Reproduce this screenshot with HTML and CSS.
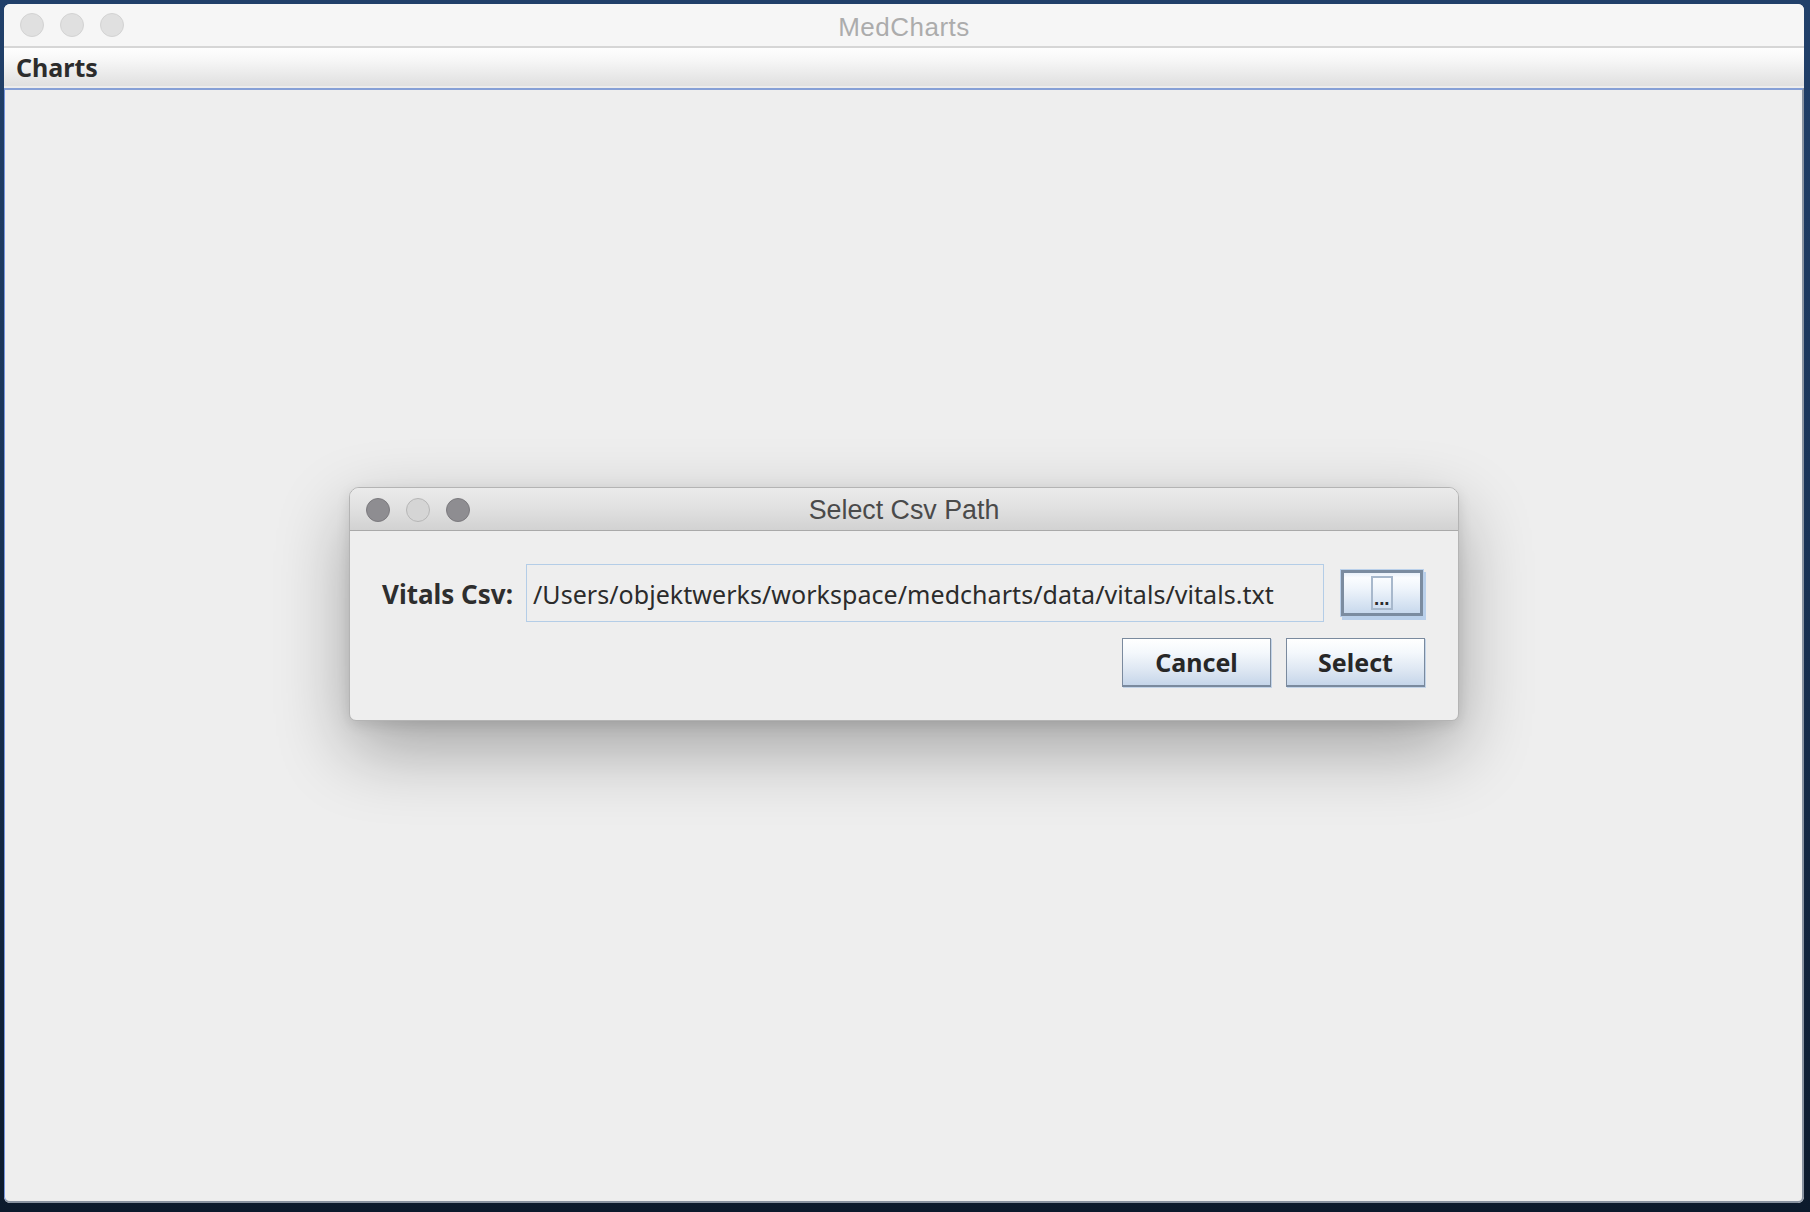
FILE: index.html
```html
<!DOCTYPE html>
<html lang="en">
<head>
<meta charset="utf-8">
<title>MedCharts</title>
<link rel="stylesheet" href="styles.css">
</head>
<body>
<div class="desktop">
  <div class="window">
    <div class="titlebar">
      <div class="lights">
        <span class="light"></span>
        <span class="light"></span>
        <span class="light"></span>
      </div>
      <div class="title">MedCharts</div>
      <div class="spacer"></div>
    </div>
    <div class="menubar">
      <span class="menu">Charts</span>
    </div>
    <div class="content">
      <div class="dialog">
        <div class="dlg-titlebar">
          <div class="dlg-lights">
            <span class="dlight dark"></span>
            <span class="dlight pale"></span>
            <span class="dlight dark"></span>
          </div>
          <div class="dlg-title">Select Csv Path</div>
          <div class="spacer"></div>
        </div>
        <div class="dlg-body">
          <div class="row">
            <label class="label">Vitals Csv:</label>
            <div class="field">/Users/objektwerks/workspace/medcharts/data/vitals/vitals.txt</div>
            <button class="browse"><span class="focus-box"><span class="dots">...</span></span></button>
          </div>
          <div class="actions">
            <button class="btn cancel">Cancel</button>
            <button class="btn select">Select</button>
          </div>
        </div>
      </div>
    </div>
  </div>
</div>
</body>
</html>
```

FILE: styles.css
```css
* {
  box-sizing: border-box;
}

html, body {
  margin: 0;
  padding: 0;
}

body {
  width: 1810px;
  height: 1212px;
  overflow: hidden;
  font-family: "Noto Sans", "DejaVu Sans", sans-serif;
}

.desktop {
  width: 1810px;
  height: 1212px;
  padding: 4px 6px 9px 4px;
  background: linear-gradient(180deg, #21406a 0%, #193356 45%, #0c1a2c 100%);
}

.window {
  width: 1800px;
  height: 1199px;
  display: flex;
  flex-direction: column;
  border-radius: 6px 6px 6px 6px;
  overflow: hidden;
  background: #eeeeee;
}

.titlebar {
  height: 44px;
  flex: none;
  display: grid;
  grid-template-columns: 1fr auto 1fr;
  align-items: center;
  background: #f6f6f6;
  border-bottom: 2px solid #d6d6d6;
}

.lights {
  display: flex;
  gap: 16px;
  padding-left: 16px;
}

.light {
  width: 24px;
  height: 24px;
  border-radius: 50%;
  background: #e0e0e0;
  border: 1px solid #d3d3d3;
}

.title {
  font-family: "Liberation Sans", Arial, sans-serif;
  font-size: 26px;
  letter-spacing: 0.5px;
  color: #acacac;
  padding-top: 5px;
}

.menubar {
  height: 40px;
  flex: none;
  display: flex;
  align-items: center;
  padding-left: 12px;
  background: linear-gradient(180deg, #fefefe 0%, #f7f7f7 30%, #e0e0e0 94%, #ececec 94%, #ececec 100%);
}

.menu {
  font-family: "Noto Sans", sans-serif;
  font-weight: 700;
  font-size: 25px;
  color: #2c2c2c;
  padding-bottom: 3px;
}

.content {
  flex: 1;
  position: relative;
  background: #eeeeee;
  border-top: 2px solid #86a0d6;
  border-left: 1px solid #7393dc;
  border-right: 2px solid #8892a0;
  border-bottom: 2px solid #8892a0;
  border-radius: 0 0 6px 6px;
}

.dialog {
  position: absolute;
  left: 344px;
  top: 397px;
  width: 1110px;
  height: 234px;
  display: flex;
  flex-direction: column;
  background: #eeeeee;
  border: 1px solid #b4b4b4;
  border-radius: 10px 10px 7px 7px;
  box-shadow: 0 28px 72px rgba(0, 0, 0, 0.32), 0 4px 14px rgba(0, 0, 0, 0.10);
  overflow: hidden;
}

.dlg-titlebar {
  height: 43px;
  flex: none;
  display: grid;
  grid-template-columns: 1fr auto 1fr;
  align-items: center;
  background: linear-gradient(180deg, #ebebeb 0%, #e0e0e0 50%, #d2d2d2 100%);
  border-bottom: 1px solid #a9a9a9;
}

.dlg-lights {
  display: flex;
  gap: 16px;
  padding-left: 16px;
  padding-top: 2px;
}

.dlight {
  width: 24px;
  height: 24px;
  border-radius: 50%;
}

.dlight.dark {
  background: #8e8d91;
  border: 1px solid #7b7a7e;
}

.dlight.pale {
  background: #d5d5d5;
  border: 1px solid #b6b6b6;
}

.dlg-title {
  font-family: "Liberation Sans", Arial, sans-serif;
  font-size: 26.8px;
  color: #4a4a4a;
  padding-top: 3px;
}

.spacer {
  width: 1px;
}

.dlg-body {
  flex: 1;
  padding: 33px 32px 0 32px;
  display: flex;
  flex-direction: column;
}

.row {
  display: flex;
  align-items: center;
  height: 58px;
}

.label {
  font-family: "Noto Sans", sans-serif;
  font-weight: 700;
  font-size: 26px;
  color: #2e2e2e;
  padding-top: 2px;
  width: 144px;
  flex: none;
}

.field {
  flex: 1;
  height: 58px;
  display: flex;
  align-items: center;
  padding-left: 6px;
  padding-top: 1px;
  border: 1px solid #b4cde7;
  background: #eeeeee;
  font-family: "Noto Sans", sans-serif;
  font-size: 25px;
  letter-spacing: 0.05px;
  color: #2b2b2b;
  white-space: nowrap;
  overflow: hidden;
}

.browse {
  flex: none;
  width: 82px;
  height: 46px;
  margin: 0 3px 0 17px;
  padding: 0;
  display: flex;
  align-items: center;
  justify-content: center;
  border: 3px solid #7b8ca0;
  box-shadow: 0 0 0 1px #bad0ea, 2px 3px 0 1px #bad0ea;
  background: linear-gradient(180deg, #e9f1fa 0%, #fbfdff 12%, #eef4fb 40%, #c8d9ed 100%);
  cursor: default;
}

.focus-box {
  width: 22px;
  height: 34px;
  border: 2px solid #a7b8cc;
  display: flex;
  align-items: flex-end;
  justify-content: center;
  padding-bottom: 4px;
}

.dots {
  font-family: "DejaVu Sans", sans-serif;
  font-weight: 700;
  font-size: 15px;
  line-height: 8px;
  height: 8px;
  letter-spacing: -0.5px;
  color: #2a2a2a;
  margin-left: -1px;
}

.actions {
  display: flex;
  justify-content: flex-end;
  gap: 15px;
  margin-top: 16px;
  padding-right: 1px;
}

.btn {
  height: 49px;
  padding: 0;
  font-family: "Noto Sans", sans-serif;
  font-weight: 700;
  font-size: 25px;
  color: #272727;
  border: 1px solid #7a8a9e;
  border-bottom-width: 2px;
  box-shadow: 1px 1px 0 #c3d4e8;
  background: linear-gradient(180deg, #ffffff 0%, #f4f8fc 30%, #dfe8f3 65%, #c6d6ea 100%);
  cursor: default;
}

.btn.cancel {
  width: 149px;
}

.btn.select {
  width: 139px;
}
```
